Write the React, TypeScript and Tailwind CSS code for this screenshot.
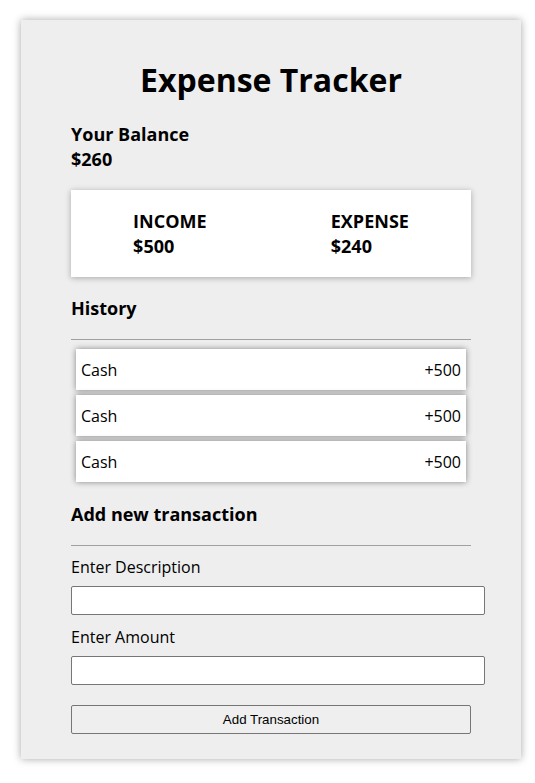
const items = [
  { text: "Cash", amount: "+500" },
  { text: "Cash", amount: "+500" },
  { text: "Cash", amount: "+500" },
]

const App = () => {
  return (
    <div className="min-h-[783px] bg-white pl-[21px] pt-5 font-['Open_Sans',sans-serif] text-black">
      <div className="w-[500px] bg-[#eeeeee] px-[50px] pb-[25px] pt-[38px] shadow-[0_0_8px_rgba(0,0,0,0.35)]">
        <h1 className="text-center text-[32px] font-bold leading-[43px]">Expense Tracker</h1>

        <div className="mt-[21px]">
          <h4 className="text-[18px] font-bold leading-[25px]">Your Balance</h4>
          <h4 className="text-[18px] font-bold leading-[25px]">$260</h4>
        </div>

        <div className="mt-[18px] flex h-[87px] items-center justify-around bg-white shadow-[0_1px_6px_rgba(0,0,0,0.3)]">
          <div>
            <h4 className="text-[18px] font-bold leading-[25px]">INCOME</h4>
            <p className="text-[18px] font-bold leading-[25px]">$500</p>
          </div>
          <div>
            <h4 className="text-[18px] font-bold leading-[25px]">EXPENSE</h4>
            <p className="text-[18px] font-bold leading-[25px]">$240</p>
          </div>
        </div>

        <h3 className="mt-[19px] text-[18px] font-bold leading-[25px]">History</h3>
        <hr className="mt-[18px] border-t border-[#a0a0a0]" />
        <ul className="mt-[9px] flex flex-col gap-[5px]">
          {items.map((item, i) => (
            <li
              key={i}
              className="mx-[5px] flex h-[41px] items-center justify-between bg-white px-[5px] text-[16px] shadow-[0_0_6px_rgba(0,0,0,0.45)]"
            >
              <span>{item.text}</span>
              <span>{item.amount}</span>
            </li>
          ))}
        </ul>

        <h3 className="mt-[20px] text-[18px] font-bold leading-[25px]">Add new transaction</h3>
        <hr className="mt-[18px] border-t border-[#a0a0a0]" />
        <form>
          <label className="mt-[10px] block text-[16px] leading-[22px]">Enter Description</label>
          <input
            type="text"
            className="mt-[8px] block h-[29px] w-[414px] rounded-[2px] border border-[#767676] bg-white px-[6px]"
          />
          <label className="mt-[11px] block text-[16px] leading-[22px]">Enter Amount</label>
          <input
            type="text"
            className="mt-[8px] block h-[29px] w-[414px] rounded-[2px] border border-[#767676] bg-white px-[6px]"
          />
          <button
            type="button"
            className="mt-[20px] block h-[29px] w-[400px] rounded-[2px] border border-[#767676] bg-[#efefef] font-['Liberation_Sans',Arial,sans-serif] text-[13.33px]"
          >
            Add Transaction
          </button>
        </form>
      </div>
    </div>
  )
}

export default App
